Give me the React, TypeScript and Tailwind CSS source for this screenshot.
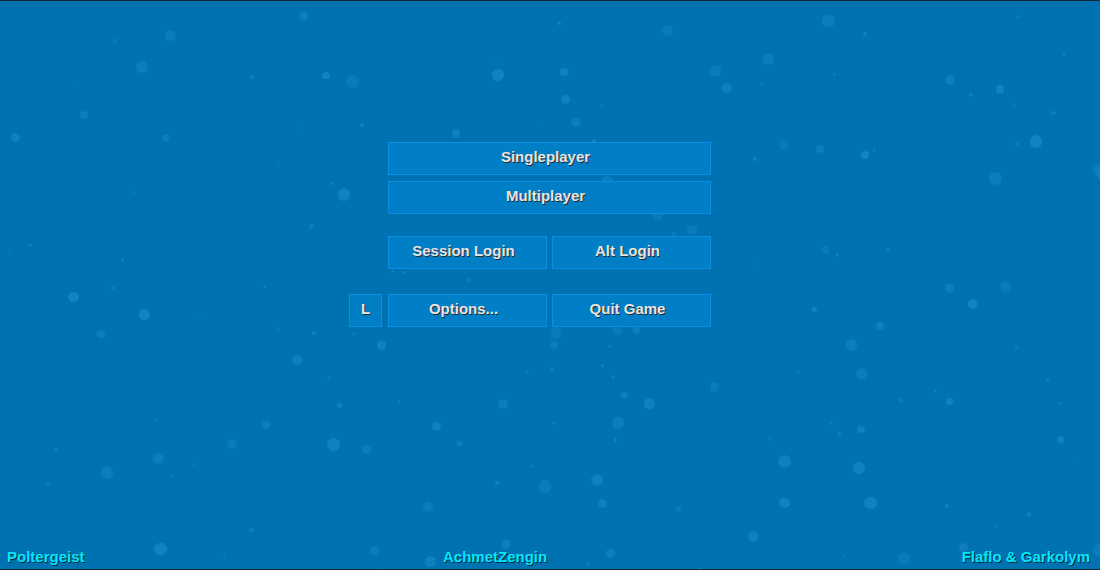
import { useMemo } from 'react'

// tiny seeded rng so the bubbles stay put between renders
function rng(seed: number) {
  let s = seed
  return () => {
    s = (s * 1664525 + 1013904223) % 4294967296
    return s / 4294967296
  }
}

function Bubbles() {
  const dots = useMemo(() => {
    const r = rng(42)
    return Array.from({ length: 170 }, () => {
      const big = r() < 0.45
      return {
        x: r() * 1100,
        y: r() * 570,
        d: big ? 7 + r() * 6 : 2 + r() * 3,
        o: 0.35 + r() * 0.4,
      }
    })
  }, [])
  return (
    <div className="pointer-events-none absolute inset-0 overflow-hidden">
      {dots.map((b, i) => (
        <span
          key={i}
          className="absolute rounded-full bg-[#1a88cc]"
          style={{ left: b.x, top: b.y, width: b.d, height: b.d, opacity: b.o }}
        />
      ))}
    </div>
  )
}

function MenuButton({ label, className = '' }: { label: string; className?: string }) {
  return (
    <button
      className={`flex h-[33px] items-center justify-center border border-[#0b8ee4] bg-[#007fc6] pb-[2px] text-[15px] font-bold text-[#e6e6e6] [text-shadow:1px_1px_0_#2a2a2a] ${className}`}
    >
      {label}
    </button>
  )
}

export default function App() {
  return (
    <div
      className="relative flex h-[570px] w-[1100px] flex-col overflow-hidden border-y border-[#1c2833] bg-[#0072b1]"
      style={{ fontFamily: '"Liberation Sans", Arial, sans-serif' }}
    >
      <Bubbles />

      <div className="relative flex flex-1 pl-[388px] pt-[141px]">
        <div className="flex w-[323px] flex-col">
          <MenuButton label="Singleplayer" className="w-full pr-[8px]" />
          <MenuButton label="Multiplayer" className="mt-[6px] w-full pr-[8px]" />

          <div className="mt-[22px] flex gap-[5px]">
            <MenuButton label="Session Login" className="w-[159px] pr-[8px]" />
            <MenuButton label="Alt Login" className="w-[159px] pr-[8px]" />
          </div>

          <div className="relative mt-[25px] flex gap-[5px]">
            <MenuButton label="L" className="absolute left-[-39px] top-0 w-[33px]" />
            <MenuButton label="Options..." className="w-[159px] pr-[8px]" />
            <MenuButton label="Quit Game" className="w-[159px] pr-[8px]" />
          </div>
        </div>
      </div>

      <div className="relative flex items-end px-[7px] pb-[1px] text-[15px] font-bold text-[#00e8ff] [text-shadow:1px_1px_0_#0a2a36]">
        <span className="w-[436px]">Poltergeist</span>
        <span>AchmetZengin</span>
        <span className="ml-auto pr-[3px]">Flaflo &amp; Garkolym</span>
      </div>
    </div>
  )
}
